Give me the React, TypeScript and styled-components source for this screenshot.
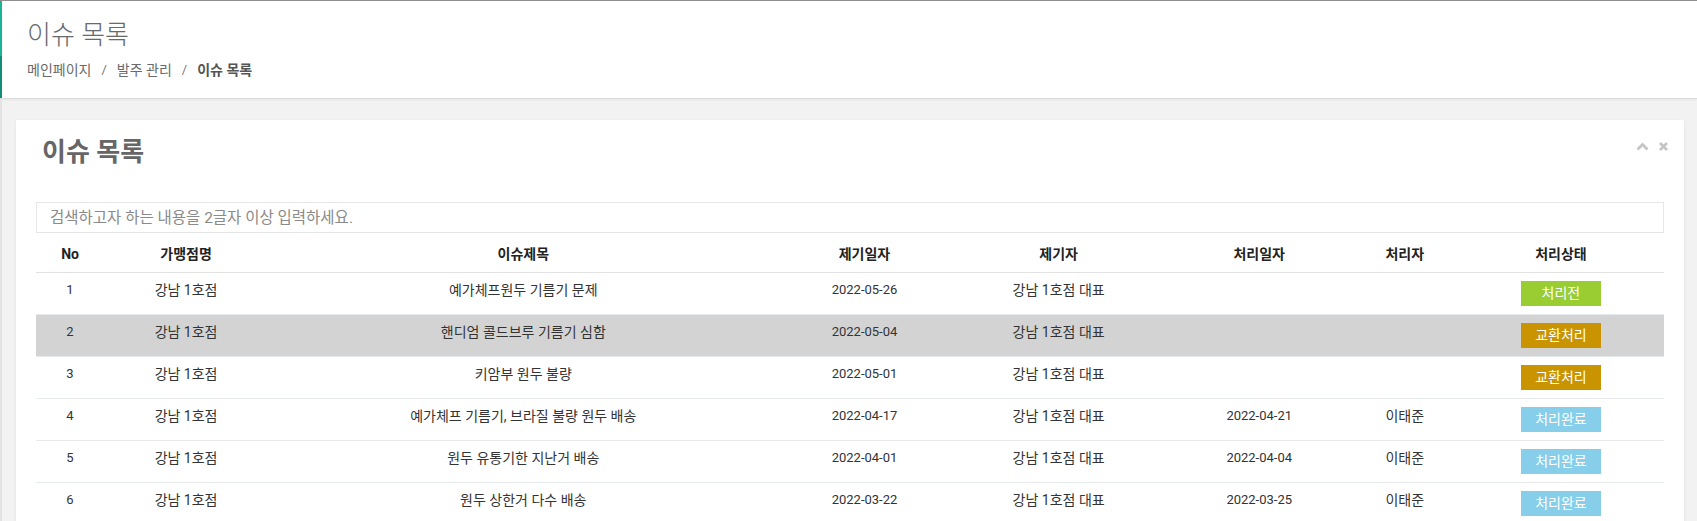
import React from "react";
import styled, { createGlobalStyle } from "styled-components";

const GlobalStyle = createGlobalStyle`
  html, body { margin: 0; padding: 0; }
  body {
    background: #f2f2f3;
    font-family: Roboto, "Noto Sans CJK KR", sans-serif;
    font-size: 13px;
    color: #333;
  }
  * { box-sizing: border-box; }
`;

const Page = styled.div`
  min-height: 100vh;
  border-top: 1px solid #8e8e8e;
  background: #f2f2f3;
`;

const Heading = styled.header`
  height: 98px;
  padding: 17px 0 0 27px;
  background:
    linear-gradient(#1ab394, #1ab394) 0 0 / 2px 55px no-repeat,
    linear-gradient(#108e76, #108e76) 0 55px / 2px 100% no-repeat,
    #fff;
  border-bottom: 1px solid #dcdcdc;
  box-shadow: 0 1px 2px rgba(0, 0, 0, 0.05);
`;

const HeadingTitle = styled.h2`
  margin: 0;
  font-size: 26px;
  font-weight: 300;
  line-height: 34px;
  color: #676a6c;
`;

const Breadcrumb = styled.ol`
  list-style: none;
  margin: 9px 0 0;
  padding: 0;
  display: flex;
  align-items: center;
  gap: 10px;
  font-size: 14px;
  line-height: 18px;
  color: #676a6c;
`;

const Crumb = styled.li<{ $active?: boolean }>`
  font-weight: ${(p) => (p.$active ? 700 : 400)};
  color: ${(p) => (p.$active ? "#555" : "#676a6c")};
`;

const Sep = styled.li`
  color: #777;
  font-size: 13px;
`;

const Content = styled.main`
  border-left: 2px solid #e3e3e3;
  padding: 21px 13px 0 14px;
`;

const Card = styled.section`
  background: #fff;
  box-shadow: 0 1px 3px rgba(0, 0, 0, 0.08);
  padding: 15px 20px 20px;
`;

const CardHead = styled.div`
  display: flex;
  align-items: flex-start;
  justify-content: space-between;
  padding-left: 6px;
  height: 67px;
`;

const CardTitle = styled.h3`
  margin: 0;
  font-size: 26px;
  font-weight: 700;
  line-height: 34px;
  color: #666;
`;

const Tools = styled.div`
  display: flex;
  align-items: center;
  gap: 10px;
  margin-top: 7px;
  margin-right: -4px;
`;

const ToolIcon = styled.svg`
  display: block;
  color: #c4c4c4;
`;

const SearchInput = styled.input`
  display: block;
  width: 100%;
  height: 31px;
  border: 1px solid #e5e6e7;
  padding: 0 13px;
  font-family: Roboto, "Noto Sans CJK KR", sans-serif;
  font-size: 15.5px;
  color: #555;
  outline: none;
  &::placeholder {
    color: #8a8a8a;
  }
`;

const Table = styled.table`
  width: 100%;
  margin-top: 4px;
  border-collapse: collapse;
  table-layout: fixed;
`;

const Th = styled.th`
  padding: 8px;
  font-size: 14px;
  font-weight: 700;
  line-height: 18.5px;
  color: #222;
  text-align: center;
  border-bottom: 1px solid #e2e2e2;
`;

const Row = styled.tr<{ $highlight?: boolean }>`
  background: ${(p) => (p.$highlight ? "#d3d3d3" : "transparent")};
  border-top: 1px solid #e7eaec;
  &:first-child { border-top: none; }
`;

const Td = styled.td<{ $num?: boolean }>`
  padding: 8px;
  vertical-align: top;
  text-align: center;
  font-size: ${(p) => (p.$num ? "13px" : "14px")};
  line-height: 18.5px;
  color: #333;
  white-space: nowrap;
`;

const StatusBadge = styled.span<{ $bg: string }>`
  display: block;
  width: 80px;
  height: 25px;
  margin: 0 auto;
  background: ${(p) => p.$bg};
  color: #fff;
  font-size: 14px;
  line-height: 25px;
  text-align: center;
`;

type Issue = {
  no: number;
  store: string;
  title: string;
  date: string;
  reporter: string;
  doneDate: string;
  handler: string;
  status: "처리전" | "교환처리" | "처리완료";
  highlight?: boolean;
};

const statusColor: Record<Issue["status"], string> = {
  처리전: "#9acd32",
  교환처리: "#c99400",
  처리완료: "#87ceeb",
};

const issues: Issue[] = [
  { no: 1, store: "강남 1호점", title: "예가체프원두 기름기 문제", date: "2022-05-26", reporter: "강남 1호점 대표", doneDate: "", handler: "", status: "처리전" },
  { no: 2, store: "강남 1호점", title: "핸디엄 콜드브루 기름기 심함", date: "2022-05-04", reporter: "강남 1호점 대표", doneDate: "", handler: "", status: "교환처리", highlight: true },
  { no: 3, store: "강남 1호점", title: "키암부 원두 불량", date: "2022-05-01", reporter: "강남 1호점 대표", doneDate: "", handler: "", status: "교환처리" },
  { no: 4, store: "강남 1호점", title: "예가체프 기름기, 브라질 불량 원두 배송", date: "2022-04-17", reporter: "강남 1호점 대표", doneDate: "2022-04-21", handler: "이태준", status: "처리완료" },
  { no: 5, store: "강남 1호점", title: "원두 유통기한 지난거 배송", date: "2022-04-01", reporter: "강남 1호점 대표", doneDate: "2022-04-04", handler: "이태준", status: "처리완료" },
  { no: 6, store: "강남 1호점", title: "원두 상한거 다수 배송", date: "2022-03-22", reporter: "강남 1호점 대표", doneDate: "2022-03-25", handler: "이태준", status: "처리완료" },
];

const columns = [
  { label: "No", width: 68 },
  { label: "가맹점명", width: 164 },
  { label: "이슈제목", width: 510 },
  { label: "제기일자", width: 172 },
  { label: "제기자", width: 216 },
  { label: "처리일자", width: 185 },
  { label: "처리자", width: 106 },
  { label: "처리상태", width: 206 },
];

export default function App() {
  return (
    <>
      <GlobalStyle />
      <Page>
        <Heading>
          <HeadingTitle>이슈 목록</HeadingTitle>
          <Breadcrumb>
            <Crumb>메인페이지</Crumb>
            <Sep>/</Sep>
            <Crumb>발주 관리</Crumb>
            <Sep>/</Sep>
            <Crumb $active>이슈 목록</Crumb>
          </Breadcrumb>
        </Heading>
        <Content>
          <Card>
            <CardHead>
              <CardTitle>이슈 목록</CardTitle>
              <Tools>
                <ToolIcon width="13" height="9" viewBox="0 0 13 9">
                  <polyline points="1.5,7.5 6.5,2.5 11.5,7.5" fill="none" stroke="currentColor" strokeWidth="2.8" />
                </ToolIcon>
                <ToolIcon width="9" height="9" viewBox="0 0 9 9">
                  <path d="M1 1 L8 8 M8 1 L1 8" stroke="currentColor" strokeWidth="2.6" />
                </ToolIcon>
              </Tools>
            </CardHead>
            <SearchInput placeholder="검색하고자 하는 내용을 2글자 이상 입력하세요." />
            <Table>
              <colgroup>
                {columns.map((c) => (
                  <col key={c.label} style={{ width: c.width }} />
                ))}
              </colgroup>
              <thead>
                <tr>
                  {columns.map((c) => (
                    <Th key={c.label}>{c.label}</Th>
                  ))}
                </tr>
              </thead>
              <tbody>
                {issues.map((it) => (
                  <Row key={it.no} $highlight={it.highlight}>
                    <Td $num>{it.no}</Td>
                    <Td>{it.store}</Td>
                    <Td>{it.title}</Td>
                    <Td $num>{it.date}</Td>
                    <Td>{it.reporter}</Td>
                    <Td $num>{it.doneDate}</Td>
                    <Td>{it.handler}</Td>
                    <Td>
                      <StatusBadge $bg={statusColor[it.status]}>{it.status}</StatusBadge>
                    </Td>
                  </Row>
                ))}
              </tbody>
            </Table>
          </Card>
        </Content>
      </Page>
    </>
  );
}
